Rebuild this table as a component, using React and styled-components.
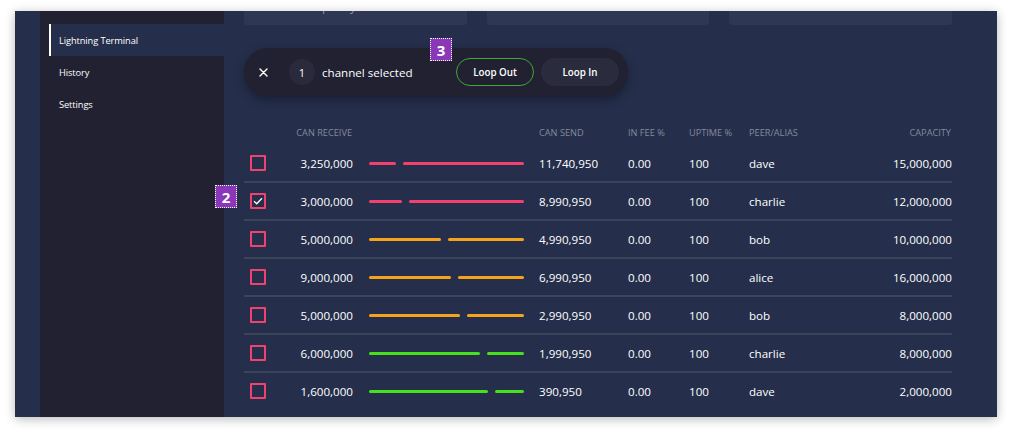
import React from "react";
import styled, { createGlobalStyle } from "styled-components";

const GlobalStyle = createGlobalStyle`
  html, body {
    margin: 0;
    padding: 0;
    background: #ffffff;
    font-family: "Open Sans", "Liberation Sans", sans-serif;
  }
  * { box-sizing: border-box; }
`;

const channels = [
  { receive: "3,250,000", send: "11,740,950", fee: "0.00", uptime: "100", peer: "dave", capacity: "15,000,000", left: 27, color: "#f5406e" },
  { receive: "3,000,000", send: "8,990,950", fee: "0.00", uptime: "100", peer: "charlie", capacity: "12,000,000", left: 33, color: "#f5406e", checked: true },
  { receive: "5,000,000", send: "4,990,950", fee: "0.00", uptime: "100", peer: "bob", capacity: "10,000,000", left: 72, color: "#f5a31b" },
  { receive: "9,000,000", send: "6,990,950", fee: "0.00", uptime: "100", peer: "alice", capacity: "16,000,000", left: 82, color: "#f5a31b" },
  { receive: "5,000,000", send: "2,990,950", fee: "0.00", uptime: "100", peer: "bob", capacity: "8,000,000", left: 91, color: "#f5a31b" },
  { receive: "6,000,000", send: "1,990,950", fee: "0.00", uptime: "100", peer: "charlie", capacity: "8,000,000", left: 111, color: "#46e01c" },
  { receive: "1,600,000", send: "390,950", fee: "0.00", uptime: "100", peer: "dave", capacity: "2,000,000", left: 119, color: "#46e01c" },
];

export default function App() {
  return (
    <Page>
      <GlobalStyle />
      <Frame>
        <Strip />
        <Sidebar>
          <NavItem $active>Lightning Terminal</NavItem>
          <NavItem>History</NavItem>
          <NavItem>Settings</NavItem>
        </Sidebar>
        <Main>
          <Cards>
            <Card>
              <CardText>Inbound Liquidity</CardText>
            </Card>
            <Card />
            <Card />
          </Cards>

          <LoopBar>
            <CloseButton>
              <svg width="9" height="9" viewBox="0 0 9 9">
                <path d="M1 1 L8 8 M8 1 L1 8" stroke="#fff" strokeWidth="1.4" strokeLinecap="round" />
              </svg>
            </CloseButton>
            <Count>1</Count>
            <Selected>channel selected</Selected>
            <LoopButton $outline>Loop Out</LoopButton>
            <LoopButton>Loop In</LoopButton>
            <Badge $top="-10px" $left="186px">3</Badge>
          </LoopBar>

          <Table>
            <HeaderRow>
              <span />
              <Head $right>Can Receive</Head>
              <span />
              <Head $pad>Can Send</Head>
              <Head>In Fee %</Head>
              <Head>Uptime %</Head>
              <Head>Peer/Alias</Head>
              <Head $right>Capacity</Head>
            </HeaderRow>
            {channels.map((ch, i) => (
              <Row key={i} $last={i === channels.length - 1}>
                <Check>
                  {ch.checked && (
                    <svg width="10" height="8" viewBox="0 0 10 8">
                      <path d="M1 4.2 L3.7 6.8 L9 1.2" fill="none" stroke="#fff" strokeWidth="1.3" />
                    </svg>
                  )}
                </Check>
                <Cell $right>{ch.receive}</Cell>
                <BarCell>
                  <Bar>
                    <Segment $color={ch.color} $width={ch.left} />
                    <Segment $color={ch.color} />
                  </Bar>
                </BarCell>
                <Cell $pad>{ch.send}</Cell>
                <Cell>{ch.fee}</Cell>
                <Cell>{ch.uptime}</Cell>
                <Cell>{ch.peer}</Cell>
                <Cell $right>{ch.capacity}</Cell>
                {ch.checked && <Badge $top="2px" $left="-29px">2</Badge>}
              </Row>
            ))}
          </Table>
        </Main>
      </Frame>
    </Page>
  );
}

const Page = styled.div`
  width: 1012px;
  height: 429px;
  padding: 11px 15px 12px 15px;
  background: #ffffff;
`;

const Frame = styled.div`
  display: flex;
  width: 982px;
  height: 406px;
  overflow: hidden;
  background: #252f4b;
  box-shadow: 0 2px 10px rgba(0, 0, 0, 0.28);
`;

const Strip = styled.div`
  width: 25px;
  flex-shrink: 0;
  background: #252f4b;
`;

const Sidebar = styled.nav`
  width: 184px;
  flex-shrink: 0;
  background: #212132;
  padding: 13px 0 0 9px;
  display: flex;
  flex-direction: column;
`;

const NavItem = styled.div`
  height: 32px;
  display: flex;
  align-items: center;
  padding-left: 8px;
  border-left: 2px solid ${(p) => (p.$active ? "#ffffff" : "transparent")};
  background: ${(p) => (p.$active ? "#252f4b" : "transparent")};
  color: #ffffff;
  font-size: 9.3px;
  letter-spacing: -0.1px;
`;

const Main = styled.main`
  flex: 1;
  padding: 0 45px 0 20px;
  display: flex;
  flex-direction: column;
`;

const Cards = styled.div`
  display: grid;
  grid-template-columns: repeat(3, 1fr);
  column-gap: 20px;
`;

const Card = styled.div`
  height: 14px;
  background: #2e3854;
  border-radius: 0 0 3px 3px;
  overflow: hidden;
  display: flex;
  align-items: flex-end;
  padding: 0 0 11px 14px;
`;

const CardText = styled.span`
  color: #8a90a2;
  font-size: 12px;
  line-height: 14px;
  white-space: nowrap;
`;

const LoopBar = styled.div`
  position: relative;
  margin-top: 23px;
  width: 384px;
  height: 48px;
  border-radius: 24px;
  background: #212132;
  box-shadow: 0 4px 10px rgba(10, 12, 25, 0.45);
  display: flex;
  align-items: center;
  padding: 0 9px 0 14px;
`;

const CloseButton = styled.div`
  width: 10px;
  height: 10px;
  display: flex;
  align-items: center;
  justify-content: center;
  margin-right: 21px;
`;

const Count = styled.div`
  width: 26px;
  height: 26px;
  border-radius: 50%;
  background: #2a2a3c;
  color: #ffffff;
  font-size: 11px;
  display: flex;
  align-items: center;
  justify-content: center;
  margin-right: 7px;
`;

const Selected = styled.span`
  color: #ffffff;
  font-size: 11.6px;
  flex: 1;
  white-space: nowrap;
`;

const LoopButton = styled.button`
  width: 78px;
  height: 28px;
  border-radius: 14px;
  margin-left: ${(p) => (p.$outline ? "0" : "7px")};
  border: 1.5px solid ${(p) => (p.$outline ? "#3caa36" : "transparent")};
  background: ${(p) => (p.$outline ? "#212132" : "#2b2b3e")};
  color: #ffffff;
  font-family: "Open Sans", "Liberation Sans", sans-serif;
  font-weight: 600;
  font-size: 9.8px;
  padding: 0;
`;

const Badge = styled.div`
  position: absolute;
  top: ${(p) => p.$top};
  left: ${(p) => p.$left};
  width: 22px;
  height: 23px;
  background: #8a38b8;
  border: 1px dotted #ffffff;
  color: #ffffff;
  font-family: "Open Sans", "Liberation Sans", sans-serif;
  font-weight: 700;
  font-size: 15px;
  display: flex;
  align-items: center;
  justify-content: center;
`;

const Table = styled.div`
  margin-top: 23px;
  display: flex;
  flex-direction: column;
`;

const columns = "16px 87px 171px 104px 61px 60px 1fr 120px";

const HeaderRow = styled.div`
  display: grid;
  grid-template-columns: ${columns};
  align-items: center;
  height: 26px;
  padding-left: 6px;
`;

const Head = styled.span`
  color: #848a9b;
  font-size: 9.2px;
  text-transform: uppercase;
  text-align: ${(p) => (p.$right ? "right" : "left")};
  padding-left: ${(p) => (p.$pad ? "15px" : "0")};
  padding-right: ${(p) => (p.$right ? "1px" : "0")};
  white-space: nowrap;
`;

const Row = styled.div`
  position: relative;
  display: grid;
  grid-template-columns: ${columns};
  align-items: center;
  height: 38px;
  padding-left: 6px;
  border-bottom: 2px solid ${(p) => (p.$last ? "transparent" : "#3c4459")};
`;

const Check = styled.div`
  width: 16px;
  height: 16px;
  border: 2px solid #f0426f;
  border-radius: 1px;
  display: flex;
  align-items: center;
  justify-content: center;
`;

const Cell = styled.span`
  color: #ffffff;
  font-size: 11.6px;
  text-align: ${(p) => (p.$right ? "right" : "left")};
  padding-left: ${(p) => (p.$pad ? "15px" : "0")};
  white-space: nowrap;
`;

const BarCell = styled.div`
  display: flex;
  justify-content: flex-end;
`;

const Bar = styled.div`
  width: 155px;
  display: flex;
  gap: 7px;
`;

const Segment = styled.div`
  height: 3px;
  border-radius: 2px;
  background: ${(p) => p.$color};
  width: ${(p) => (p.$width ? `${p.$width}px` : "auto")};
  flex: ${(p) => (p.$width ? "none" : "1")};
`;
